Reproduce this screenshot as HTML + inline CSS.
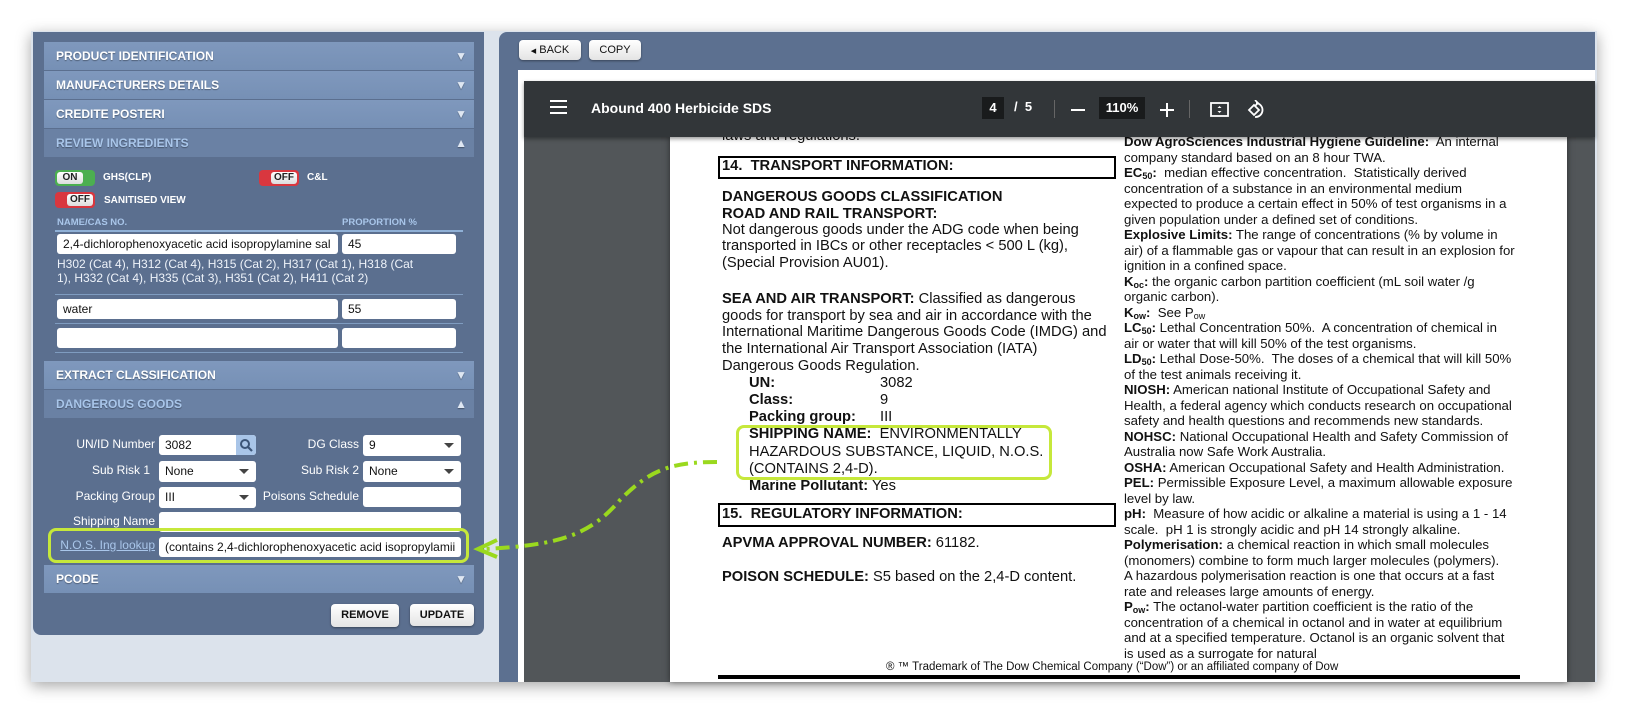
<!DOCTYPE html>
<html><head><meta charset="utf-8">
<style>
*{box-sizing:border-box;margin:0;padding:0}
body{width:1627px;height:714px;background:#fff;position:relative;overflow:hidden;font-family:"Liberation Sans",Arial,sans-serif}
.abs{position:absolute}
#frame{left:31px;top:31px;width:1566px;height:651px;background:#dce3ec;box-shadow:0 4px 14px rgba(0,0,0,.35)}
#left{left:33px;top:32px;width:451px;height:603px;background:#5b6f8f;border-radius:0 0 8px 8px}
.hdr{position:absolute;left:44px;width:430px;height:28px;background:linear-gradient(#7f98bd,#7690b5);color:#fff;font-weight:bold;font-size:12px;line-height:28px;padding-left:12px;text-shadow:0 1px 1px rgba(0,0,0,.35)}
.hdr.act{background:#6a81a4;color:#a9c6ea}
.hdr .ar{position:absolute;right:7px;top:0;font-size:12px;color:#dfe7f2}
.tg{position:absolute;width:40px;height:16px;border-radius:4px}
.tg.on{background:#4caf50}
.tg.off{background:#d9373f}
.tg .k{position:absolute;top:2px;width:26px;height:12px;background:linear-gradient(#fff,#ddd);border-radius:3px;font-size:10px;font-weight:bold;line-height:12px;text-align:center;color:#222}
.lab{position:absolute;color:#fff;font-weight:bold;font-size:10px}
.inp{position:absolute;background:#fff;border-radius:3px;font-size:12px;line-height:20px;padding-left:6px;color:#111;height:20px;overflow:hidden;white-space:nowrap}
.sep{position:absolute;left:55px;width:408px;height:1px;background:#7f9cc0}
.fl{position:absolute;color:#fff;font-size:12px;text-align:right;width:120px}
.sel::after{content:"";position:absolute;right:7px;top:8px;border:5px solid transparent;border-top:5px solid #444;border-bottom:0}
.btn{position:absolute;background:linear-gradient(#fff,#e4e4e4);border-radius:4px;font-size:11px;font-weight:bold;color:#111;text-align:center;box-shadow:0 1px 2px rgba(0,0,0,.4)}
#right{left:499px;top:32px;width:1096px;height:650px;background:#5c7090;border-radius:8px 0 0 0}
#tb{left:524px;top:81px;width:1071px;height:56px;background:#323639;color:#fff;box-shadow:0 2px 4px rgba(0,0,0,.4);z-index:3}
#pdf{left:524px;top:137px;width:1071px;height:545px;background:#525659;overflow:hidden}
.t{position:absolute;white-space:nowrap;color:#111;font-size:14.7px}
.b{font-weight:bold}
.r{position:absolute;left:1124px;top:134px;font-size:13.2px;line-height:15.5px;white-space:nowrap;color:#111}
sub{font-size:9px;vertical-align:-2px;line-height:0}
</style></head><body>
<div id="frame" class="abs"></div>
<div id="left" class="abs"></div>
<div class="hdr" style="top:42px">PRODUCT IDENTIFICATION<span class="ar">▼</span></div>
<div class="hdr" style="top:71px">MANUFACTURERS DETAILS<span class="ar">▼</span></div>
<div class="hdr" style="top:100px">CREDITE POSTERI<span class="ar">▼</span></div>
<div class="hdr act" style="top:129px">REVIEW INGREDIENTS<span class="ar">▲</span></div>

<div class="tg on" style="left:55px;top:170px"><div class="k" style="left:2px">ON</div></div>
<div class="lab" style="left:103px;top:172px">GHS(CLP)</div>
<div class="tg off" style="left:259px;top:170px"><div class="k" style="left:12px">OFF</div></div>
<div class="lab" style="left:307px;top:172px">C&amp;L</div>
<div class="tg off" style="left:55px;top:192px"><div class="k" style="left:12px">OFF</div></div>
<div class="lab" style="left:104px;top:195px">SANITISED VIEW</div>
<div class="lab" style="left:57px;top:217px;color:#a9c6ea;font-size:9.5px">NAME/CAS NO.</div>
<div class="lab" style="left:342px;top:217px;color:#a9c6ea;font-size:9.5px">PROPORTION %</div>
<div class="sep" style="top:230px;height:2px;background:#8fb0d6"></div>
<div class="inp" style="left:57px;top:234px;width:281px">2,4-dichlorophenoxyacetic acid isopropylamine sal</div>
<div class="inp" style="left:342px;top:234px;width:114px">45</div>
<div class="abs" style="left:57px;top:257px;font-size:12px;line-height:14px;color:#eef3fa;white-space:nowrap">H302 (Cat 4), H312 (Cat 4), H315 (Cat 2), H317 (Cat 1), H318 (Cat<br>1), H332 (Cat 4), H335 (Cat 3), H351 (Cat 2), H411 (Cat 2)</div>
<div class="sep" style="top:294px"></div>
<div class="inp" style="left:57px;top:299px;width:281px">water</div>
<div class="inp" style="left:342px;top:299px;width:114px">55</div>
<div class="sep" style="top:323px"></div>
<div class="inp" style="left:57px;top:328px;width:281px"></div>
<div class="inp" style="left:342px;top:328px;width:114px"></div>
<div class="sep" style="top:352px"></div>

<div class="hdr" style="top:361px">EXTRACT CLASSIFICATION<span class="ar">▼</span></div>
<div class="hdr act" style="top:390px">DANGEROUS GOODS<span class="ar">▲</span></div>

<div class="fl" style="left:35px;top:437px">UN/ID Number</div>
<div class="inp" style="left:159px;top:435px;width:97px">3082</div>
<div class="abs" style="left:236px;top:435px;width:20px;height:20px;background:#a9c5e8;border-radius:0 3px 3px 0">
<svg width="20" height="20"><circle cx="9" cy="9" r="4" fill="none" stroke="#3c5578" stroke-width="2"/><line x1="12" y1="12" x2="16" y2="16" stroke="#3c5578" stroke-width="2.2"/></svg></div>
<div class="fl" style="left:239px;top:437px">DG Class</div>
<div class="inp sel" style="left:363px;top:435px;width:98px;height:21px">9</div>
<div class="fl" style="left:30px;top:463px">Sub Risk 1</div>
<div class="inp sel" style="left:159px;top:461px;width:97px;height:21px">None</div>
<div class="fl" style="left:239px;top:463px">Sub Risk 2</div>
<div class="inp sel" style="left:363px;top:461px;width:98px;height:21px">None</div>
<div class="fl" style="left:35px;top:489px">Packing Group</div>
<div class="inp sel" style="left:159px;top:487px;width:97px;height:21px">III</div>
<div class="fl" style="left:229px;top:489px;width:130px">Poisons Schedule</div>
<div class="inp" style="left:363px;top:487px;width:98px;height:20px"></div>
<div class="fl" style="left:35px;top:514px">Shipping Name</div>
<div class="inp" style="left:159px;top:512px;width:302px"></div>
<div class="abs" style="left:48px;top:528px;width:421px;height:35px;border:3px solid #c6e83b;border-radius:8px"></div>
<div class="fl" style="left:35px;top:538px;color:#a9c6ea;text-decoration:underline">N.O.S. Ing lookup</div>
<div class="inp" style="left:159px;top:537px;width:302px">(contains 2,4-dichlorophenoxyacetic acid isopropylamii</div>
<div class="hdr" style="top:565px">PCODE<span class="ar">▼</span></div>
<div class="btn" style="left:331px;top:604px;width:68px;height:23px;line-height:23px">REMOVE</div>
<div class="btn" style="left:410px;top:604px;width:64px;height:22px;line-height:22px">UPDATE</div>

<div id="right" class="abs"></div>
<div class="btn" style="left:519px;top:40px;width:62px;height:20px;line-height:20px;font-weight:normal;font-size:11px"><span style="font-size:7px">◀</span> BACK</div>
<div class="btn" style="left:589px;top:40px;width:52px;height:20px;line-height:20px;font-weight:normal;font-size:11px">COPY</div>
<div class="abs" style="left:518px;top:70px;width:1077px;height:612px;background:#fff"></div>
<div id="pdf" class="abs"></div>
<div class="abs" style="left:670px;top:137px;width:897px;height:545px;background:#fff;box-shadow:0 0 6px rgba(0,0,0,.5)"></div>

<div id="tb" class="abs">
 <svg class="abs" style="left:26px;top:19px" width="18" height="14"><rect y="0" width="17" height="2" fill="#fff"/><rect y="6" width="17" height="2" fill="#fff"/><rect y="12" width="17" height="2" fill="#fff"/></svg>
 <div class="abs" style="left:67px;top:19px;font-size:14px;font-weight:bold">Abound 400 Herbicide SDS</div>
 <div class="abs" style="left:458px;top:16px;width:22px;height:22px;background:#191b1c;font-size:13px;line-height:22px;text-align:center;font-weight:bold">4</div>
 <div class="abs" style="left:490px;top:18px;font-size:13px;font-weight:bold">/ &nbsp;5</div>
 <div class="abs" style="left:530px;top:19px;width:1px;height:18px;background:#666"></div>
 <div class="abs" style="left:547px;top:28px;width:14px;height:2px;background:#fff"></div>
 <div class="abs" style="left:575px;top:16px;width:46px;height:22px;background:#191b1c;font-size:13px;line-height:22px;text-align:center;font-weight:bold">110%</div>
 <div class="abs" style="left:636px;top:28px;width:14px;height:2px;background:#fff"></div>
 <div class="abs" style="left:642px;top:22px;width:2px;height:14px;background:#fff"></div>
 <div class="abs" style="left:665px;top:19px;width:1px;height:18px;background:#666"></div>
 <svg class="abs" style="left:686px;top:21px" width="20" height="16"><rect x="1" y="1" width="17" height="13" fill="none" stroke="#fff" stroke-width="1.8"/><path d="M9.5 4l-2 2h4zM9.5 11l-2-2h4z" fill="#fff"/></svg>
 <svg class="abs" style="left:722px;top:19px" width="20" height="20"><path d="M3 10l5-5 5 5-5 5z" fill="none" stroke="#fff" stroke-width="1.8"/><path d="M10 3a7 7 0 1 1-1 14" fill="none" stroke="#fff" stroke-width="1.8"/><path d="M9 0l3 3-3 3" fill="none" stroke="#fff" stroke-width="1.6"/></svg>
</div>

<div class="t" style="left:722px;top:128px">laws and regulations.</div>
<div class="abs" style="left:718px;top:156px;width:398px;height:23px;border:2px solid #000"></div>
<div class="t b" style="left:722px;top:158px">14.&nbsp; TRANSPORT INFORMATION:</div>
<div class="t b" style="left:722px;top:189px">DANGEROUS GOODS CLASSIFICATION</div>
<div class="t b" style="left:722px;top:206px">ROAD AND RAIL TRANSPORT:</div>
<div class="t" style="left:722px;top:222px">Not dangerous goods under the ADG code when being</div>
<div class="t" style="left:722px;top:238px">transported in IBCs or other receptacles &lt; 500 L (kg),</div>
<div class="t" style="left:722px;top:255px">(Special Provision AU01).</div>
<div class="t" style="left:722px;top:291px"><b>SEA AND AIR TRANSPORT:</b> Classified as dangerous</div>
<div class="t" style="left:722px;top:308px">goods for transport by sea and air in accordance with the</div>
<div class="t" style="left:722px;top:324px">International Maritime Dangerous Goods Code (IMDG) and</div>
<div class="t" style="left:722px;top:341px">the International Air Transport Association (IATA)</div>
<div class="t" style="left:722px;top:358px">Dangerous Goods Regulation.</div>
<div class="t b" style="left:749px;top:375px">UN:</div><div class="t" style="left:880px;top:375px">3082</div>
<div class="t b" style="left:749px;top:392px">Class:</div><div class="t" style="left:880px;top:392px">9</div>
<div class="t b" style="left:749px;top:409px">Packing group:</div><div class="t" style="left:880px;top:409px">III</div>
<div class="t" style="left:749px;top:426px"><b>SHIPPING NAME:</b>&nbsp; ENVIRONMENTALLY</div>
<div class="t" style="left:749px;top:444px">HAZARDOUS SUBSTANCE, LIQUID, N.O.S.</div>
<div class="t" style="left:749px;top:461px">(CONTAINS 2,4-D).</div>
<div class="t" style="left:749px;top:478px"><b>Marine Pollutant:</b> Yes</div>
<div class="abs" style="left:736px;top:425px;width:316px;height:55px;border:3px solid #c6e83b;border-radius:8px"></div>
<div class="abs" style="left:718px;top:503px;width:398px;height:24px;border:2px solid #000"></div>
<div class="t b" style="left:722px;top:506px">15.&nbsp; REGULATORY INFORMATION:</div>
<div class="t" style="left:722px;top:535px"><b>APVMA APPROVAL NUMBER:</b> 61182.</div>
<div class="t" style="left:722px;top:569px"><b>POISON SCHEDULE:</b> S5 based on the 2,4-D content.</div>
<div class="t" style="left:886px;top:661px;font-size:11.5px">® ™ Trademark of The Dow Chemical Company (“Dow”) or an affiliated company of Dow</div>
<div class="abs" style="left:718px;top:675px;width:802px;height:4px;background:#000"></div>

<div class="r"><b>Dow AgroSciences Industrial Hygiene Guideline:</b>&nbsp; An internal<br>company standard based on an 8 hour TWA.<br><b>EC<sub>50</sub>:</b>&nbsp; median effective concentration.&nbsp; Statistically derived<br>concentration of a substance in an environmental medium<br>expected to produce a certain effect in 50% of test organisms in a<br>given population under a defined set of conditions.<br><b>Explosive Limits:</b> The range of concentrations (% by volume in<br>air) of a flammable gas or vapour that can result in an explosion for<br>ignition in a confined space.<br><b>K<sub>oc</sub>:</b> the organic carbon partition coefficient (mL soil water /g<br>organic carbon).<br><b>K<sub>ow</sub>:</b>&nbsp; See P<sub>ow</sub><br><b>LC<sub>50</sub>:</b> Lethal Concentration 50%.&nbsp; A concentration of chemical in<br>air or water that will kill 50% of the test organisms.<br><b>LD<sub>50</sub>:</b> Lethal Dose-50%.&nbsp; The doses of a chemical that will kill 50%<br>of the test animals receiving it.<br><b>NIOSH:</b> American national Institute of Occupational Safety and<br>Health, a federal agency which conducts research on occupational<br>safety and health questions and recommends new standards.<br><b>NOHSC:</b> National Occupational Health and Safety Commission of<br>Australia now Safe Work Australia.<br><b>OSHA:</b> American Occupational Safety and Health Administration.<br><b>PEL:</b> Permissible Exposure Level, a maximum allowable exposure<br>level by law.<br><b>pH:</b>&nbsp; Measure of how acidic or alkaline a material is using a 1 - 14<br>scale.&nbsp; pH 1 is strongly acidic and pH 14 strongly alkaline.<br><b>Polymerisation:</b> a chemical reaction in which small molecules<br>(monomers) combine to form much larger molecules (polymers).<br>A hazardous polymerisation reaction is one that occurs at a fast<br>rate and releases large amounts of energy.<br><b>P<sub>ow</sub>:</b> The octanol-water partition coefficient is the ratio of the<br>concentration of a chemical in octanol and in water at equilibrium<br>and at a specified temperature. Octanol is an organic solvent that<br>is used as a surrogate for natural</div>

<svg class="abs" style="left:0;top:0;z-index:5" width="1627" height="714">
<path d="M717 462 C670 462 650 470 620 500 C590 535 560 545 485 549" fill="none" stroke="#9ad91e" stroke-width="4" stroke-dasharray="14 6 3 6"/>
<path d="M497 540 L478 549 L497 557" fill="none" stroke="#9ad91e" stroke-width="4"/>
</svg>
</body></html>
